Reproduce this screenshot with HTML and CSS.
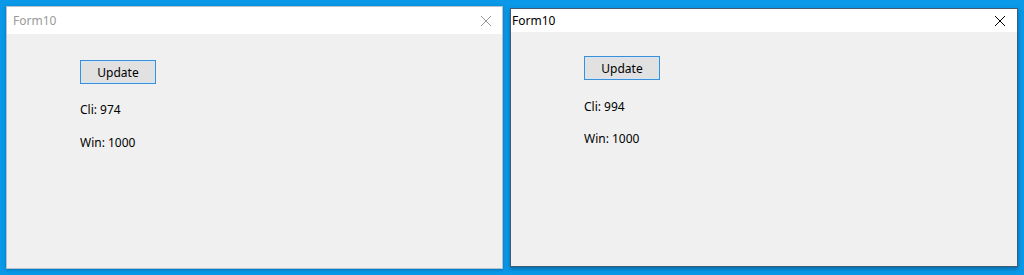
FILE: index.html
```html
<!DOCTYPE html>
<html>
<head>
<meta charset="utf-8">
<link rel="stylesheet" href="styles.css">
<title>Form10</title>
</head>
<body>
<div class="desktop">
  <div class="window inactive">
    <div class="titlebar">
      <span class="title">Form10</span>
      <svg class="close" width="12" height="12" viewBox="0 0 12 12"><path d="M1 1 L11 11 M11 1 L1 11" stroke="currentColor" stroke-width="1" fill="none"/></svg>
    </div>
    <div class="client">
      <button class="btn">Update</button>
      <div class="label">Cli: 974</div>
      <div class="label">Win: 1000</div>
    </div>
  </div>
  <div class="window active">
    <div class="titlebar">
      <span class="title">Form10</span>
      <svg class="close" width="12" height="12" viewBox="0 0 12 12"><path d="M1 1 L11 11 M11 1 L1 11" stroke="currentColor" stroke-width="1" fill="none"/></svg>
    </div>
    <div class="client">
      <button class="btn">Update</button>
      <div class="label">Cli: 994</div>
      <div class="label">Win: 1000</div>
    </div>
  </div>
</div>
</body>
</html>
```

FILE: styles.css
```css
html, body {
  margin: 0;
  padding: 0;
  background: #0a99e8;
  height: 275px;
  overflow: hidden;
  font-family: "Noto Sans", "Open Sans", sans-serif;
  font-size: 12px;
}
.desktop {
  display: flex;
  align-items: flex-start;
  gap: 7px;
  padding: 6px 0 0 6px;
}
.window {
  background: #f0f0f0;
  display: flex;
  flex-direction: column;
  box-sizing: border-box;
}
.window.inactive {
  width: 497px;
  height: 263px;
  border: 1px solid #b4c2cd;
  box-shadow: 0 1px 3px rgba(0, 40, 80, 0.35);
}
.window.active {
  width: 508px;
  height: 259px;
  margin-top: 2px;
  border: 1px solid #3f5b75;
  box-shadow: 0 2px 4px rgba(0, 30, 60, 0.4);
}
.titlebar {
  background: #ffffff;
  display: flex;
  align-items: center;
  justify-content: space-between;
}
.inactive .titlebar {
  height: 27px;
  padding: 0 10px 0 6px;
  color: #9a9a9a;
}
.active .titlebar {
  height: 23px;
  padding: 0 11px 0 1px;
  color: #000;
}
.title {
  font-size: 12px;
  line-height: 16px;
}
.close {
  display: block;
}
.client {
  display: flex;
  flex-direction: column;
  align-items: flex-start;
  padding-left: 73px;
}
.inactive .client {
  padding-top: 26px;
}
.active .client {
  padding-top: 24px;
}
.btn {
  width: 76px;
  height: 24px;
  box-sizing: border-box;
  border: 1px solid #3c8fd7;
  background: #e1e1e1;
  box-shadow: inset 0 0 0 1px #d2e6f7;
  font-family: "Noto Sans", "Open Sans", sans-serif;
  font-size: 12px;
  color: #000;
  padding: 0;
  margin: 0;
}
.label {
  line-height: 16px;
  color: #000;
}
.inactive .btn + .label {
  margin-top: 18px;
}
.inactive .label + .label {
  margin-top: 17px;
}
.active .btn + .label {
  margin-top: 19px;
}
.active .label + .label {
  margin-top: 16px;
}
```
